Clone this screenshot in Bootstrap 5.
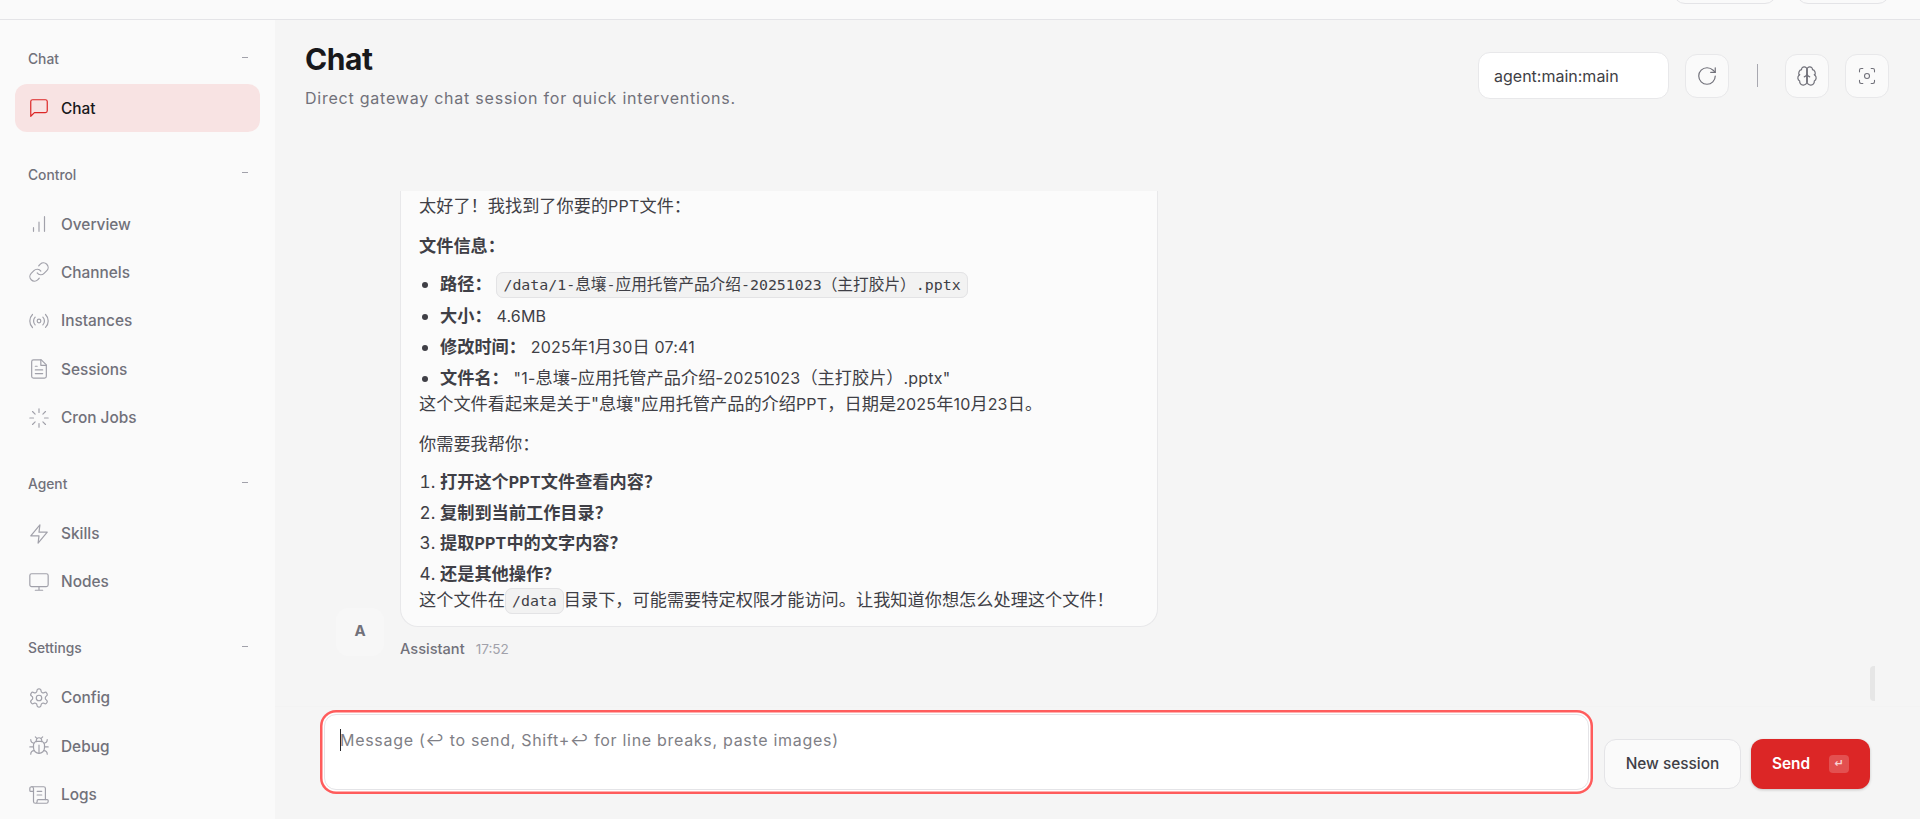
<!DOCTYPE html>
<html lang="zh">
<head>
<meta charset="utf-8">
<title>Chat</title>
<link href="https://cdn.jsdelivr.net/npm/bootstrap@5.3.0/dist/css/bootstrap.min.css" rel="stylesheet">
<style>
html,body{height:100%}
body{background:#f5f5f5;font-family:Inter,"Noto Sans CJK SC",sans-serif;color:#3f3f46;overflow:hidden}
.topstrip{height:20px;background:#fafafa;border-bottom:1px solid #e4e4e7;padding:0 30px 15px 0;gap:19px}
.topstrip span{display:block;height:40px;border:1px solid #e4e4e7;border-radius:12px;flex:none}
.w-a{width:104px}
.w-b{width:94px}
.side{width:275px;background:#fafafa;padding:0 15px;flex:none}
.grp-head{padding:0 13px;height:20px;font-size:13.8px;font-weight:500;color:#71717a;margin-bottom:15px}
.grp-head i{display:block;width:6px;height:1px;background:#a1a1aa;margin-right:-1px;transform:translateY(-2px)}
.side-group{margin-bottom:32.5px}
.side-group:first-child{margin-top:29px}
.side-link{display:flex;align-items:center;gap:11px;height:48.4px;padding:0 13px;font-size:15.4px;font-weight:500;color:#71717a;text-decoration:none;border-radius:12px}
.side-link svg{width:22px;height:22px;fill:none;stroke:#a1a1aa;stroke-width:1.3;stroke-linecap:round;stroke-linejoin:round;flex:none}
.side-link.on{background:#f8e3e3;color:#18181b}
.side-link.on svg{stroke:#dc2626}
.pg-main{min-width:0}
.pg-head{height:171px;padding:0 31px 0 30px;flex:none}
.pg-title{font-size:30px;font-weight:700;color:#18181b;line-height:36px;letter-spacing:-.4px;margin:21px 0 0}
.pg-sub{font-size:16px;letter-spacing:.77px;color:#71717a;line-height:22px;margin:10px 0 0}
.tools{margin-top:32px;height:47px}
.sess{width:191px;height:47px;background:#fff;border:1px solid #e8e8ea;border-radius:12px;padding:0 15px;font-size:16px;color:#3f3f46}
.tool-btn{width:44px;height:44px;background:#fafafa;border:1px solid #e8e8ea;border-radius:12px;padding:0}
.tool-btn svg{width:22px;height:22px;fill:none;stroke:#71717a;stroke-width:1.3;stroke-linecap:round;stroke-linejoin:round}
.tool-btn.first{margin-left:16px}
.tool-btn.last{margin-left:16px}
.tool-btn.last svg{width:20px;height:20px}
.tool-sep{width:1px;height:23px;background:#a8a8b0;margin:0 27px 0 28px}
.thread{min-height:0;padding:0 45px 48px 61px;border-bottom:1px solid #f3f3f3;overflow:hidden;position:relative}
.ava{width:48px;height:48px;background:#f7f7f7;border-radius:12px;font-size:15px;font-weight:700;color:#71717a;margin:0 16px 2.5px 0;flex:none}
.bubble{width:758px;background:#fbfbfb;border:1px solid #e8e8ea;border-top:0;border-radius:0 0 18px 18px;padding:2px 18px 12px;font-size:17.2px;line-height:25.5px;color:#3f3f46}
.bubble p{margin:0 0 13px}
.bubble p:last-child{margin:0}
.bubble ul,.bubble ol{margin:0;padding-left:21px}
.bubble li{margin-top:4.4px}
.bubble li:first-child{margin-top:0}
.bubble strong{font-weight:700}
.lat{font-size:16px;letter-spacing:.2px}
.mono{font-family:"DejaVu Sans Mono","Noto Sans CJK SC",monospace;font-size:14.9px;background:#f2f2f2;border:1px solid #e3e3e5;border-radius:7px;padding:3px 6px;color:#3f3f46}
.mono span{font-size:15.7px}
.meta{margin-top:11px;height:20px;line-height:20px}
.meta b{font-size:14.6px;font-weight:500;color:#71717a}
.meta span{font-size:13.6px;color:#a1a1aa;margin-left:11px}
.thumb{position:absolute;right:45px;bottom:5.5px;width:5px;height:35px;background:#e6e6e6;border-radius:4px 0 0 4px}
.composer{padding:7px 50px 29px 49px;gap:15px;flex:none}
.ta-wrap{position:relative}
.ta{display:block;width:100%;height:76px;resize:none;background:#fff;border:1.5px solid #e4e4e7;border-radius:12px;padding:12px 15px;font-size:16px;letter-spacing:.7px;line-height:26px;outline:0;box-shadow:0 0 0 1.5px #fff,0 0 0 4px #ff5c5c}
.ta::placeholder{color:#7f7f86;opacity:1}
.caret-bar{position:absolute;left:16px;top:15px;width:1px;height:22px;background:#27272a}
.new-btn{width:137px;height:50px;background:#fafafa;border:1px solid #e4e4e7;border-radius:12px;font-size:15.4px;font-weight:500;color:#3f3f46;margin-bottom:1px;padding:0}
.send-btn{width:119px;height:50px;background:#dc2626;border:0;border-radius:12px;font-size:15.4px;font-weight:600;color:#fff;margin:0 0 1px -5px;padding:0 21px;box-shadow:0 1px 3px rgba(0,0,0,.2)}
.kbd-mark{width:20px;height:18px;background:#e35050;border-radius:4px;font-size:11px;line-height:18px;text-align:center;color:#f8d5d5;font-family:"DejaVu Sans",sans-serif}
</style>
</head>
<body class="d-flex flex-column">
<div class="topstrip d-flex justify-content-end align-items-end flex-none">
  <span class="w-a"></span><span class="w-b"></span>
</div>
<div class="d-flex flex-grow-1 overflow-hidden">
  <aside class="side d-flex flex-column">
    <div class="side-group">
      <div class="grp-head d-flex justify-content-between align-items-center"><span>Chat</span><i></i></div>
      <nav class="d-flex flex-column">
        <a class="side-link on" href="#"><svg viewBox="0 0 24 24"><path d="M21 15a2 2 0 0 1-2 2H7l-4 4V5a2 2 0 0 1 2-2h14a2 2 0 0 1 2 2z"/></svg>Chat</a>
      </nav>
    </div>
    <div class="side-group">
      <div class="grp-head d-flex justify-content-between align-items-center"><span>Control</span><i></i></div>
      <nav class="d-flex flex-column">
        <a class="side-link" href="#"><svg viewBox="0 0 24 24"><path d="M12 20V10M18 20V4M6 20v-4"/></svg>Overview</a>
        <a class="side-link" href="#"><svg viewBox="0 0 24 24"><path d="M10 13a5 5 0 0 0 7.54.54l3-3a5 5 0 0 0-7.07-7.07l-1.72 1.71"/><path d="M14 11a5 5 0 0 0-7.54-.54l-3 3a5 5 0 0 0 7.07 7.07l1.71-1.71"/></svg>Channels</a>
        <a class="side-link" href="#"><svg viewBox="0 0 24 24"><path d="M4.9 19.1C1 15.2 1 8.8 4.9 4.9"/><path d="M7.8 16.2c-2.3-2.3-2.3-6.1 0-8.5"/><circle cx="12" cy="12" r="2"/><path d="M16.2 7.8c2.3 2.3 2.3 6.1 0 8.5"/><path d="M19.1 4.9C23 8.8 23 15.1 19.1 19"/></svg>Instances</a>
        <a class="side-link" href="#"><svg viewBox="0 0 24 24"><path d="M14.5 2H6a2 2 0 0 0-2 2v16a2 2 0 0 0 2 2h12a2 2 0 0 0 2-2V7.5L14.5 2z"/><path d="M14 2v6h6M16 13H8M16 17H8M10 9H8"/></svg>Sessions</a>
        <a class="side-link" href="#"><svg viewBox="0 0 24 24"><path d="M12 2v4M12 18v4M4.93 4.93l2.83 2.83M16.24 16.24l2.83 2.83M2 12h4M18 12h4M4.93 19.07l2.83-2.83M16.24 7.76l2.83-2.83"/></svg>Cron Jobs</a>
      </nav>
    </div>
    <div class="side-group">
      <div class="grp-head d-flex justify-content-between align-items-center"><span>Agent</span><i></i></div>
      <nav class="d-flex flex-column">
        <a class="side-link" href="#"><svg viewBox="0 0 24 24"><path d="M13 2 3 14h9l-1 8 10-12h-9l1-8z"/></svg>Skills</a>
        <a class="side-link" href="#"><svg viewBox="0 0 24 24"><rect x="2" y="3" width="20" height="14" rx="2"/><path d="M8 21h8M12 17v4"/></svg>Nodes</a>
      </nav>
    </div>
    <div class="side-group">
      <div class="grp-head d-flex justify-content-between align-items-center"><span>Settings</span><i></i></div>
      <nav class="d-flex flex-column">
        <a class="side-link" href="#"><svg viewBox="0 0 24 24"><path d="M12.22 2h-.44a2 2 0 0 0-2 2v.18a2 2 0 0 1-1 1.73l-.43.25a2 2 0 0 1-2 0l-.15-.08a2 2 0 0 0-2.73.73l-.22.38a2 2 0 0 0 .73 2.73l.15.1a2 2 0 0 1 1 1.72v.51a2 2 0 0 1-1 1.74l-.15.09a2 2 0 0 0-.73 2.73l.22.38a2 2 0 0 0 2.73.73l.15-.08a2 2 0 0 1 2 0l.43.25a2 2 0 0 1 1 1.73V20a2 2 0 0 0 2 2h.44a2 2 0 0 0 2-2v-.18a2 2 0 0 1 1-1.73l.43-.25a2 2 0 0 1 2 0l.15.08a2 2 0 0 0 2.73-.73l.22-.39a2 2 0 0 0-.73-2.73l-.15-.08a2 2 0 0 1-1-1.74v-.5a2 2 0 0 1 1-1.74l.15-.09a2 2 0 0 0 .73-2.73l-.22-.38a2 2 0 0 0-2.73-.73l-.15.08a2 2 0 0 1-2 0l-.43-.25a2 2 0 0 1-1-1.73V4a2 2 0 0 0-2-2z"/><circle cx="12" cy="12" r="3"/></svg>Config</a>
        <a class="side-link" href="#"><svg viewBox="0 0 24 24"><path d="m8 2 1.88 1.88M14.12 3.88 16 2M9 7.13v-1a3.003 3.003 0 1 1 6 0v1"/><path d="M12 20c-3.3 0-6-2.7-6-6v-3a4 4 0 0 1 4-4h4a4 4 0 0 1 4 4v3c0 3.3-2.7 6-6 6"/><path d="M12 20v-9M6.53 9C4.6 8.8 3 7.1 3 5M6 13H2M3 21c0-2.1 1.7-3.9 3.8-4M20.97 5c0 2.1-1.6 3.8-3.5 4M22 13h-4M17.2 17c2.1.1 3.8 1.9 3.8 4"/></svg>Debug</a>
        <a class="side-link" href="#"><svg viewBox="0 0 24 24"><path d="M15 12h-5M15 8h-5M19 17V5a2 2 0 0 0-2-2H4"/><path d="M8 21h12a2 2 0 0 0 2-2v-1a1 1 0 0 0-1-1H11a1 1 0 0 0-1 1v1a2 2 0 1 1-4 0V5a2 2 0 1 0-4 0v2a1 1 0 0 0 1 1h3"/></svg>Logs</a>
      </nav>
    </div>
  </aside>
  <main class="pg-main flex-grow-1 d-flex flex-column">
    <header class="pg-head d-flex justify-content-between align-items-start">
      <div>
        <h1 class="pg-title">Chat</h1>
        <p class="pg-sub">Direct gateway chat session for quick interventions.</p>
      </div>
      <div class="tools d-flex align-items-center">
        <div class="sess d-flex align-items-center">agent:main:main</div>
        <button class="tool-btn first d-flex align-items-center justify-content-center"><svg viewBox="0 0 24 24"><path d="M21 12a9 9 0 1 1-9-9c2.52 0 4.93 1 6.74 2.74L21 8"/><path d="M21 3v5h-5"/></svg></button>
        <div class="tool-sep"></div>
        <button class="tool-btn d-flex align-items-center justify-content-center"><svg viewBox="0 0 24 24"><path d="M12 5a3 3 0 1 0-5.997.125 4 4 0 0 0-2.526 5.77 4 4 0 0 0 .556 6.588A4 4 0 1 0 12 18Z"/><path d="M12 5a3 3 0 1 1 5.997.125 4 4 0 0 1 2.526 5.77 4 4 0 0 1-.556 6.588A4 4 0 1 1 12 18Z"/><path d="M15 13a4.5 4.5 0 0 1-3-4 4.5 4.5 0 0 1-3 4M12 5v13M3.477 10.896a4 4 0 0 1 .585-.396M19.938 10.5a4 4 0 0 1 .585.396"/></svg></button>
        <button class="tool-btn last d-flex align-items-center justify-content-center"><svg viewBox="0 0 24 24"><path d="M3 7V5a2 2 0 0 1 2-2h2M17 3h2a2 2 0 0 1 2 2v2M21 17v2a2 2 0 0 1-2 2h-2M7 21H5a2 2 0 0 1-2-2v-2"/><circle cx="12" cy="12" r="3"/></svg></button>
      </div>
    </header>
    <section class="thread flex-grow-1 d-flex align-items-end">
      <div class="ava d-flex align-items-center justify-content-center">A</div>
      <div>
        <div class="bubble">
          <p>太好了！我找到了你要的<span class="lat">PPT</span>文件：</p>
          <p><strong>文件信息：</strong></p>
          <ul>
            <li><strong>路径：</strong> <code class="mono">/data/1-<span>息壤</span>-<span>应用托管产品介绍</span>-20251023<span>（主打胶片）</span>.pptx</code></li>
            <li><strong>大小：</strong> <span class="lat">4.6MB</span></li>
            <li><strong>修改时间：</strong> <span class="lat">2025</span>年<span class="lat">1</span>月<span class="lat">30</span>日 <span class="lat">07:41</span></li>
            <li><strong>文件名：</strong> <span class="lat">"1-</span>息壤-应用托管产品介绍-<span class="lat">20251023</span>（主打胶片）<span class="lat">.pptx"</span></li>
          </ul>
          <p>这个文件看起来是关于"息壤"应用托管产品的介绍<span class="lat">PPT</span>，日期是<span class="lat">2025</span>年<span class="lat">10</span>月<span class="lat">23</span>日。</p>
          <p>你需要我帮你：</p>
          <ol>
            <li><strong>打开这个<span class="lat">PPT</span>文件查看内容？</strong></li>
            <li><strong>复制到当前工作目录？</strong></li>
            <li><strong>提取<span class="lat">PPT</span>中的文字内容？</strong></li>
            <li><strong>还是其他操作？</strong></li>
          </ol>
          <p>这个文件在<code class="mono">/data</code>目录下，可能需要特定权限才能访问。让我知道你想怎么处理这个文件！</p>
        </div>
        <div class="meta"><b>Assistant</b><span>17:52</span></div>
      </div>
      <div class="thumb"></div>
    </section>
    <div class="composer d-flex align-items-end">
      <div class="ta-wrap flex-grow-1">
        <textarea class="ta" placeholder="Message (↩ to send, Shift+↩ for line breaks, paste images)"></textarea>
        <span class="caret-bar"></span>
      </div>
      <button class="new-btn">New session</button>
      <button class="send-btn d-flex align-items-center justify-content-between">Send<span class="kbd-mark">↵</span></button>
    </div>
  </main>
</div>
<script src="https://cdn.jsdelivr.net/npm/bootstrap@5.3.0/dist/js/bootstrap.bundle.min.js"></script>
</body>
</html>
